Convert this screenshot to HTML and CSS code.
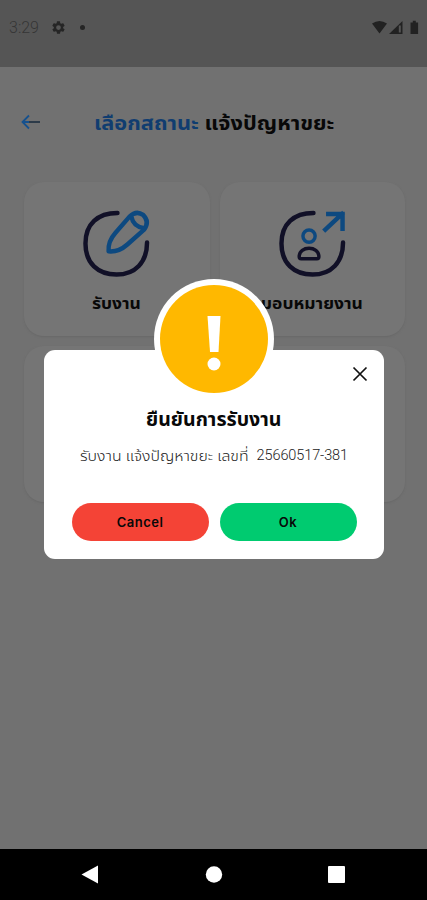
FILE: index.html
```html
<!DOCTYPE html>
<html lang="th">
<head>
<meta charset="utf-8">
<title>ยืนยันการรับงาน</title>
<link rel="stylesheet" href="styles.css">
</head>
<body>
<div class="phone">
  <header class="status">
    <span class="time">3:29</span>
    <svg class="gear" viewBox="0 0 24 24"><path fill-rule="evenodd" d="M19.4 13a7.500 7.500 0 0 0 0-2l2.100-1.600a.5.5 0 0 0 .1-.6l-2-3.500a.5.5 0 0 0-.6-.2l-2.500 1a7.300 7.300 0 0 0-1.700-1l-.4-2.600a.5.5 0 0 0-.5-.5h-4a.5.5 0 0 0-.5.5L9.100 5.100a7.300 7.300 0 0 0-1.700 1l-2.500-1a.5.5 0 0 0-.6.200l-2 3.500a.5.5 0 0 0 .1.600L4.600 11a7.500 7.500 0 0 0 0 2l-2.200 1.600a.5.5 0 0 0-.1.600l2 3.500c.1.200.4.300.6.200l2.500-1a7.300 7.300 0 0 0 1.700 1l.4 2.600c0 .3.200.5.500.5h4c.3 0 .5-.2.500-.5l.4-2.600a7.300 7.300 0 0 0 1.700-1l2.500 1c.2.100.5 0 .6-.2l2-3.500a.5.5 0 0 0-.1-.6zM12 15.800a3.800 3.800 0 1 1 0-7.600 3.800 3.800 0 0 1 0 7.600z"/></svg>
    <i class="dot"></i>
    <svg class="signals" viewBox="0 0 50 16">
      <path d="M2 3.500Q9.500-1.500 17 3.500L9.500 13.500z"/>
      <path d="M19 14L32.500 1V14z"/>
      <path d="M29.800 5.500V12.500" class="slot"/>
      <path d="M40.500 2.500h2.300V.8h3v1.700h2.300v11.500h-7.600z"/>
    </svg>
  </header>
  <main class="page">
    <div class="titlebar">
      <svg class="back" viewBox="0 0 20 16"><path d="M3 8H19" stroke="#263646"/><path d="M8 1.500L1.500 8L8 14.500M1.500 8H8" stroke="#16518e"/></svg>
      <h1 class="title"><span class="accent">เลือกสถานะ</span> แจ้งปัญหาขยะ</h1>
    </div>
    <section class="cards">
      <article class="card">
        <svg class="icon" viewBox="0 0 68 68">
          <path class="navy" d="M35 3C15 3 2.500 14 2.500 34S15 65.500 34 65.500 65 53 65 33"/>
          <path class="blue" d="M26 42Q25 32 33 23L47 7Q54 0 61 5Q68 12 62 20L45 35Q36 43 26 42zM49 6.500Q51 17 62 18.500"/>
        </svg>
        <h2 class="label">รับงาน</h2>
      </article>
      <article class="card">
        <svg class="icon" viewBox="0 0 68 68">
          <path class="navy" d="M35 3C15 3 2.500 14 2.500 34S15 65.500 34 65.500 65 53 65 33"/>
          <path class="blue square" d="M47 20L64 4M50 4H64.500V19"/>
          <circle class="blue thin" cx="30.500" cy="26.500" r="6.200"/>
          <path class="navy thin" d="M22.500 49.500Q20.500 49.500 20.500 47.500C20.500 36 40.500 36 40.500 47.500Q40.500 49.500 38.500 49.500z"/>
        </svg>
        <h2 class="label">มอบหมายงาน</h2>
      </article>
      <article class="card"></article>
      <article class="card"></article>
    </section>
  </main>
  <nav class="nav">
    <svg viewBox="0 0 20 20"><path d="M1.500 9.500L18 .5V18.500z"/></svg>
    <svg viewBox="0 0 20 20"><circle cx="10" cy="9.500" r="8.200"/></svg>
    <svg viewBox="0 0 20 20"><rect x="1" y="1" width="17" height="17" rx="1"/></svg>
  </nav>
  <div class="dialog" role="dialog">
    <svg class="alert" viewBox="0 0 120 120"><circle cx="60" cy="60" r="60" fill="#fff"/><circle cx="60" cy="60" r="54" fill="#ffb800"/><path d="M53.500 37H66.500L64.500 73H56z" fill="#fff"/><circle cx="60" cy="85" r="6.500" fill="#fff"/></svg>
    <svg class="close" viewBox="0 0 16 16"><path d="M1.500 1.500L14.500 14.500M14.500 1.500L1.500 14.500"/></svg>
    <h2 class="heading">ยืนยันการรับงาน</h2>
    <p class="message"><span class="detail">รับงาน แจ้งปัญหาขยะ เลขที่</span><span class="number">25660517-381</span></p>
    <div class="actions">
      <button class="btn cancel">Cancel</button>
      <button class="btn ok">Ok</button>
    </div>
  </div>
</div>
</body>
</html>
```
FILE: styles.css
```css
* { box-sizing: border-box; }
body { margin: 0; font-family: "Noto Sans Thai", "Noto Sans", "Open Sans", sans-serif; }
h1, h2, p { margin: 0; white-space: nowrap; }
.phone { position: relative; width: 427px; height: 900px; display: flex; flex-direction: column; background: #717171; overflow: hidden; }
.status { height: 67px; flex: none; background: #555; display: flex; align-items: center; padding: 0 7px 12px 9px; color: #363636; }
.time { font: 300 16px/20px Roboto, sans-serif; width: 42px; }
.gear { width: 15px; height: 15px; fill: #252525; }
.dot { width: 5px; height: 5px; border-radius: 50%; background: #252525; margin-left: 14px; }
.signals { width: 50px; height: 16px; margin-left: auto; fill: #222; }
.slot { stroke: #555; stroke-width: 2; }
.page { flex: 1; }
.titlebar { height: 115px; display: flex; align-items: center; padding: 0 0 5px 21px; }
.back { width: 20px; height: 16px; fill: none; stroke-width: 1.8; }
.title { font-size: 20px; line-height: 30px; margin: 3px 0 0 53px; color: #080808; transform: scaleX(1.088); transform-origin: left; }
.accent { color: #103d70; }
.cards { display: grid; grid-template-columns: 185.5px 185.5px; grid-template-rows: 154px 156px; gap: 10px; padding-left: 24px; }
.card { background: #757575; border-radius: 20px; box-shadow: 0 1px 2px #686868; padding-top: 28px; display: flex; flex-direction: column; align-items: center; }
.icon { width: 67px; height: 67px; fill: none; stroke-linecap: round; stroke-linejoin: round; stroke-width: 4.500; overflow: visible; }
.navy { stroke: #111027; }
.blue { stroke: #0d4980; }
.square { stroke-linecap: square; stroke-linejoin: miter; }
.thin { stroke-width: 3.500; }
.label { font-size: 16px; line-height: 24px; margin-top: 15px; color: #080808; transform: scaleX(1.09); }
.nav { height: 51px; flex: none; background: #000; display: flex; justify-content: space-between; align-items: center; padding: 0 80px; }
.nav svg { width: 20px; height: 20px; fill: #fff; }
.dialog { position: absolute; left: 44px; top: 350px; width: 340px; height: 209px; background: #fff; border-radius: 11px; padding-top: 57px; display: flex; flex-direction: column; align-items: center; }
.alert { position: absolute; width: 120px; height: 120px; left: 110px; top: -71px; }
.close { position: absolute; width: 16px; height: 16px; right: 16px; top: 16px; stroke: #111; stroke-width: 1.700; fill: none; }
.heading { font-size: 19px; line-height: 28px; color: #080808; transform: scaleX(1.03); }
.message { width: 268px; font-size: 15px; line-height: 22px; margin-top: 11px; color: #222; display: flex; justify-content: space-between; }
.detail { font-weight: 300; transform: scaleX(1.055); transform-origin: left; }
.number { font: 300 14.500px/20px Roboto, sans-serif; letter-spacing: -.1px; transform: scaleX(1); transform-origin: right; }
.actions { display: flex; gap: 11px; margin-top: 35px; }
.btn { width: 137px; height: 38px; border: 0; border-radius: 19px; padding: 0; font: 600 13px/18px Inter, sans-serif; letter-spacing: .5px; color: #080808; }
.cancel { background: #f44336; }
.ok { background: #00cb70; }
```
